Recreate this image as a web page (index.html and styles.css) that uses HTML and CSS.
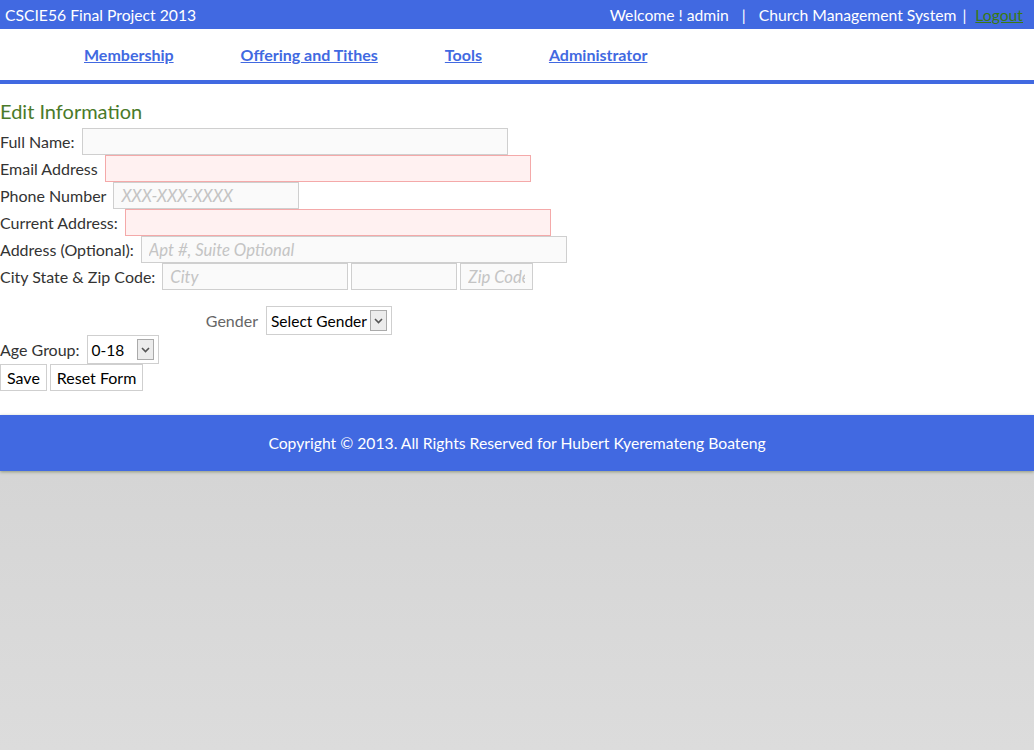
FILE: index.html
```html
<!DOCTYPE html>
<html>
<head>
<meta charset="utf-8">
<link rel="stylesheet" href="styles.css">
</head>
<body>
<div class="page">
  <header class="topbar">
    <div class="brand">CSCIE56 Final Project 2013</div>
    <div class="account">
      <span>Welcome ! admin</span>
      <span class="sep">|</span>
      <span>Church Management System</span>
      <span class="sep2">|</span>
      <a href="#" class="logout">Logout</a>
    </div>
  </header>
  <nav class="nav">
    <a href="#">Membership</a>
    <a href="#">Offering and Tithes</a>
    <a href="#">Tools</a>
    <a href="#">Administrator</a>
  </nav>
  <main class="content">
    <h1 class="title">Edit Information</h1>
    <form class="form">
      <div class="row"><label>Full Name:</label><input class="field w426" type="text"></div>
      <div class="row"><label>Email Address</label><input class="field req w426" type="text"></div>
      <div class="row"><label>Phone Number</label><input class="field w186" type="text" placeholder="XXX-XXX-XXXX"></div>
      <div class="row"><label>Current Address:</label><input class="field req w426" type="text"></div>
      <div class="row"><label>Address (Optional):</label><input class="field w426" type="text" placeholder="Apt #, Suite Optional"></div>
      <div class="row"><label>City State &amp; Zip Code:</label><input class="field w186" type="text" placeholder="City"><input class="field w106 tight" type="text"><input class="field w73 tight" type="text" placeholder="Zip Code"></div>
      <div class="row gender-row"><label class="gender-label">Gender</label>
        <div class="sel w126"><span class="sel-text">Select Gender</span><span class="arrow"><svg width="9" height="6" viewBox="0 0 9 6"><path d="M1 1 L4.5 4.5 L8 1" fill="none" stroke="#555" stroke-width="1.6"/></svg></span></div>
      </div>
      <div class="row age-row"><label>Age Group:</label>
        <div class="sel w72"><span class="sel-text">0-18</span><span class="arrow"><svg width="9" height="6" viewBox="0 0 9 6"><path d="M1 1 L4.5 4.5 L8 1" fill="none" stroke="#555" stroke-width="1.6"/></svg></span></div>
      </div>
      <div class="row btns"><button type="button" class="btn">Save</button><button type="button" class="btn">Reset Form</button></div>
    </form>
  </main>
  <footer class="footer">Copyright © 2013. All Rights Reserved for Hubert Kyeremateng Boateng</footer>
</div>
</body>
</html>
```
FILE: styles.css
```css
html, body {
  margin: 0;
  padding: 0;
}
body {
  min-height: 750px;
  font-family: Lato, "Open Sans", sans-serif;
  font-size: 16px;
  color: #333;
  background: linear-gradient(to bottom, #c9c9c9 0px, #dcdcdc 750px);
  background-attachment: fixed;
}
.page {
  background: #fff;
}
.topbar {
  height: 29px;
  background: #4169e1;
  color: #fff;
  display: flex;
  align-items: center;
  justify-content: space-between;
  padding: 0 11px 0 5px;
  font-size: 15.7px;
}
.account {
  display: flex;
  align-items: center;
}
.sep { margin: 0 13px; }
.sep2 { margin: 0 9px 0 6px; }
.logout {
  color: #3a7a10;
  text-decoration: underline;
}
.nav {
  height: 51px;
  border-bottom: 4px solid #4169e1;
  display: flex;
  align-items: center;
  padding-left: 84px;
  gap: 67px;
}
.nav a {
  color: #4169e1;
  font-weight: bold;
  font-size: 16px;
  text-decoration: underline;
}
.content {
  padding: 0 0 24px 0;
}
.title {
  margin: 0 0 4px 0;
  padding-top: 15px;
  font-size: 20px;
  font-weight: normal;
  color: #4a7a2a;
  line-height: 25px;
  height: 25px;
}
.form {
  display: flex;
  flex-direction: column;
}
.row {
  display: flex;
  align-items: center;
  height: 27px;
}
.row label {
  margin-right: 7px;
  white-space: nowrap;
}
.field {
  box-sizing: border-box;
  height: 27px;
  border: 1px solid #cfcfcf;
  background: #fafafa;
  font-family: Lato, sans-serif;
  font-size: 16.7px;
  padding: 0 7px;
  color: #333;
  outline: none;
}
.field::placeholder {
  color: #c4c4c4;
  font-style: italic;
}
.req {
  background: #fff1f1;
  border-color: #f4a9a9;
}
.tight { margin-left: 3px; }
.w426 { width: 426px; }
.w186 { width: 186px; }
.w106 { width: 106px; }
.w73 { width: 73px; }
.gender-row {
  margin-top: 16px;
  height: 29px;
}
.age-row {
  height: 29px;
}
.row label.gender-label {
  width: 258px;
  text-align: right;
  color: #666;
  margin-right: 8px;
}
.sel {
  box-sizing: border-box;
  height: 29px;
  border: 1px solid #cfcfcf;
  background: #fff;
  display: flex;
  align-items: center;
  justify-content: space-between;
  padding: 0 4px 0 4px;
  color: #000;
  font-size: 15.5px;
}
.w126 { width: 126px; }
.w72 { width: 72px; }
.arrow {
  box-sizing: border-box;
  width: 17px;
  height: 21px;
  border: 1px solid #aaa;
  background: #ececec;
  display: flex;
  align-items: center;
  justify-content: center;
}
.btns { height: 27px; }
.btn {
  box-sizing: border-box;
  height: 27px;
  border: 1px solid #cfcfcf;
  background: #fff;
  font-family: Lato, sans-serif;
  font-size: 16px;
  color: #000;
  padding: 0 6px;
  margin-right: 3px;
}
.footer {
  height: 56px;
  background: #4169e1;
  color: #fff;
  display: flex;
  align-items: center;
  justify-content: center;
  font-size: 15.7px;
  box-shadow: 0 1px 3px rgba(60, 80, 20, 0.45);
}
```
